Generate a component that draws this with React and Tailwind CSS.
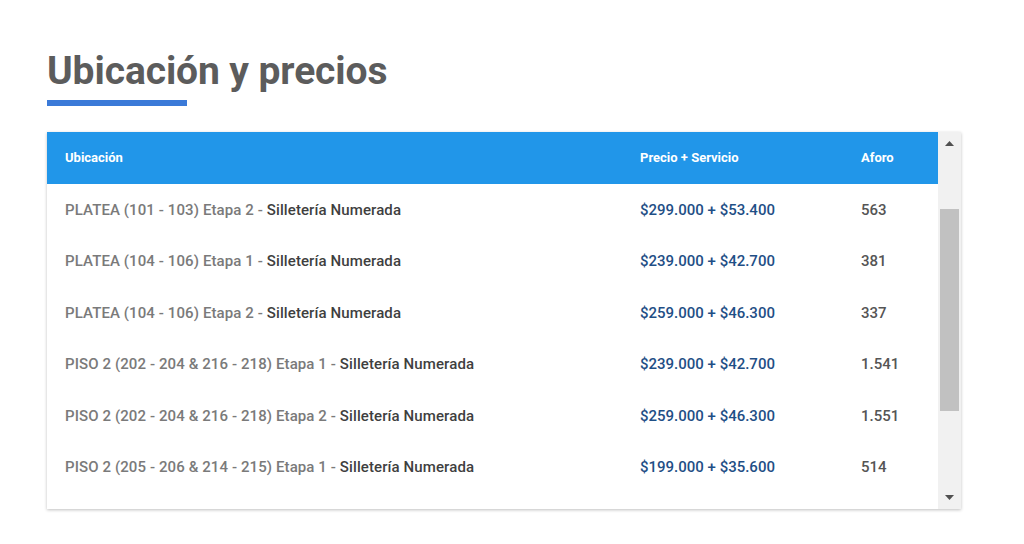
const ROWS = [
  { zone: 'PLATEA (101 - 103) Etapa 2', price: '$299.000 + $53.400', aforo: '563' },
  { zone: 'PLATEA (104 - 106) Etapa 1', price: '$239.000 + $42.700', aforo: '381' },
  { zone: 'PLATEA (104 - 106) Etapa 2', price: '$259.000 + $46.300', aforo: '337' },
  { zone: 'PISO 2 (202 - 204 & 216 - 218) Etapa 1', price: '$239.000 + $42.700', aforo: '1.541' },
  { zone: 'PISO 2 (202 - 204 & 216 - 218) Etapa 2', price: '$259.000 + $46.300', aforo: '1.551' },
  { zone: 'PISO 2 (205 - 206 & 214 - 215) Etapa 1', price: '$199.000 + $35.600', aforo: '514' },
];

function Row({ r }) {
  return (
    <div className="flex h-[51.5px] shrink-0 items-center text-[15px] font-medium">
      <div className="w-[593px] pl-[18px] tracking-[0.1px] text-[#7a7a7a]">
        {r.zone} - <span className="text-[#3f3f3f]">Silletería Numerada</span>
      </div>
      <div className="w-[221px] text-[#1f4f86]">{r.price}</div>
      <div className="text-[#555555]">{r.aforo}</div>
    </div>
  );
}

export default function App() {
  return (
    <div className="h-[544px] w-[1024px] bg-white font-['Roboto',sans-serif]">
      <div className="pl-[47px] pt-[47px]">
        <h1 className="text-[39px] font-bold leading-[48px] tracking-[-0.1px] text-[#5c5c5c]">Ubicación y precios</h1>
        <div className="mt-[5px] h-[6px] w-[140px] bg-[#3b7ad8]" />
      </div>

      <div className="ml-[47px] mt-[26px] flex h-[377px] w-[914px] overflow-hidden bg-white shadow-[0_1px_3px_rgba(0,0,0,0.25)]">
        <div className="flex w-[891px] flex-col overflow-hidden">
          <div className="flex h-[52px] shrink-0 items-center bg-[#2196e9] text-[13px] font-bold text-white">
            <div className="w-[593px] pl-[18px]">Ubicación</div>
            <div className="w-[221px]">Precio + Servicio</div>
            <div>Aforo</div>
          </div>
          {ROWS.map((r, i) => (
            <Row key={i} r={r} />
          ))}
        </div>

        {/* scrollbar */}
        <div className="flex w-[23px] flex-col items-center bg-[#f1f1f1]">
          <div className="flex h-[23px] w-full items-center justify-center">
            <svg width="9" height="5" viewBox="0 0 9 5"><path d="M0 5 L4.5 0 L9 5 Z" fill="#505050" /></svg>
          </div>
          <div className="mt-[54px] h-[202px] w-[19px] bg-[#c1c1c1]" />
          <div className="flex-1" />
          <div className="flex h-[23px] w-full items-center justify-center">
            <svg width="9" height="5" viewBox="0 0 9 5"><path d="M0 0 L4.5 5 L9 0 Z" fill="#505050" /></svg>
          </div>
        </div>
      </div>
    </div>
  );
}
